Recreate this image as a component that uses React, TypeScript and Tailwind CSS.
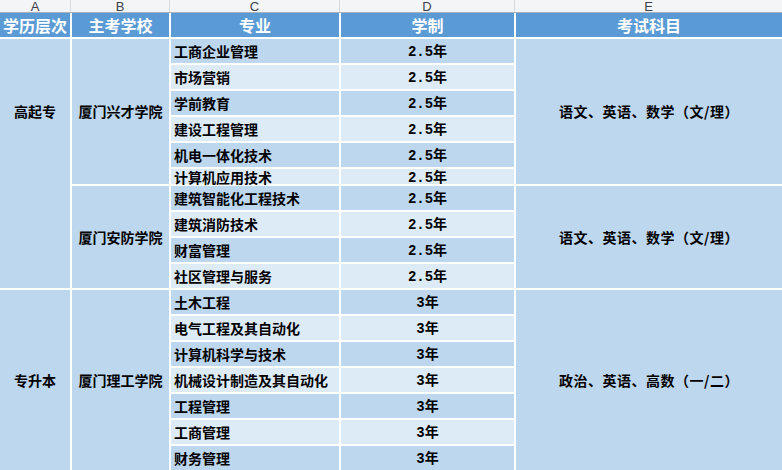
import React from 'react';

const majors = [
    { name: '工商企业管理', years: '2.5年' },
    { name: '市场营销', years: '2.5年' },
    { name: '学前教育', years: '2.5年' },
    { name: '建设工程管理', years: '2.5年' },
    { name: '机电一体化技术', years: '2.5年' },
    { name: '计算机应用技术', years: '2.5年' },
    { name: '建筑智能化工程技术', years: '2.5年' },
    { name: '建筑消防技术', years: '2.5年' },
    { name: '财富管理', years: '2.5年' },
    { name: '社区管理与服务', years: '2.5年' },
    { name: '土木工程', years: '3年' },
    { name: '电气工程及其自动化', years: '3年' },
    { name: '计算机科学与技术', years: '3年' },
    { name: '机械设计制造及其自动化', years: '3年' },
    { name: '工程管理', years: '3年' },
    { name: '工商管理', years: '3年' },
    { name: '财务管理', years: '3年' },
];

// row-start classes written out so tailwind picks them up
const rowStarts = [
    'row-start-2', 'row-start-3', 'row-start-4', 'row-start-5', 'row-start-6', 'row-start-7',
    'row-start-8', 'row-start-9', 'row-start-10', 'row-start-11', 'row-start-12', 'row-start-13',
    'row-start-14', 'row-start-15', 'row-start-16', 'row-start-17', 'row-start-18',
];

const cjk = "font-['Noto_Sans_CJK_SC',sans-serif]";

export default function App() {
    return (
        <div className={`w-[782px] h-[470px] overflow-hidden bg-white ${cjk}`}>
            {/* column letters */}
            <div className="grid grid-cols-[71px_99px_170px_175px_1fr] h-[13px] bg-[#f4f5f7] border-b border-[#a9b0bb] font-['Liberation_Sans',sans-serif] text-[13px] text-[#3a3f4a] leading-none overflow-hidden">
                {['A', 'B', 'C', 'D', 'E'].map((l, i) => (
                    <div
                        key={l}
                        className={`flex items-end justify-center pb-[4px] ${i < 4 ? 'border-r border-[#d6d9de]' : ''}`}
                    >
                        {l}
                    </div>
                ))}
            </div>

            <div className="grid grid-cols-[70px_97px_168px_173px_1fr] grid-rows-[24px_24px_24px_24px_24px_24px_15px_24px_24px_24px_24px_24px_24px_24px_24px_24px_24px_24px] gap-[2px] bg-white">
                {/* header */}
                {['学历层次', '主考学校', '专业', '学制', '考试科目'].map((h) => (
                    <div key={h} className="row-start-1 bg-[#5b9bd5] text-white text-[16px] font-bold flex items-center justify-center leading-none">
                        {h}
                    </div>
                ))}

                {/* level */}
                <div className="col-start-1 row-start-2 row-span-10 bg-[#bdd7ee] text-[14px] font-bold text-black">
                    <div className="h-[145px] flex items-center justify-center">高起专</div>
                </div>
                <div className="col-start-1 row-start-12 row-span-7 bg-[#bdd7ee] text-[14px] font-bold text-black flex items-center justify-center">
                    专升本
                </div>

                {/* school */}
                <div className="col-start-2 row-start-2 row-span-6 bg-[#bdd7ee] text-[14px] font-bold text-black flex items-center justify-center">
                    厦门兴才学院
                </div>
                <div className="col-start-2 row-start-8 row-span-4 bg-[#bdd7ee] text-[14px] font-bold text-black flex items-center justify-center">
                    厦门安防学院
                </div>
                <div className="col-start-2 row-start-12 row-span-7 bg-[#bdd7ee] text-[14px] font-bold text-black flex items-center justify-center">
                    厦门理工学院
                </div>

                {/* majors + years */}
                {majors.map((m, i) => {
                    const bg = i % 2 === 0 ? 'bg-[#bdd7ee]' : 'bg-[#ddebf7]';
                    return (
                        <React.Fragment key={m.name}>
                            <div className={`col-start-3 ${rowStarts[i]} ${bg} text-[14px] font-bold text-black flex items-center pl-[3px] leading-none`}>
                                {m.name}
                            </div>
                            <div className={`col-start-4 ${rowStarts[i]} ${bg} text-[14px] font-bold text-black flex items-center justify-center leading-none pt-[2px] font-['Liberation_Mono','Noto_Sans_CJK_SC',monospace]`}>
                                {m.years}
                            </div>
                        </React.Fragment>
                    );
                })}

                {/* subjects */}
                <div className="col-start-5 row-start-2 row-span-6 bg-[#bdd7ee] text-[14px] font-bold text-black tracking-[0.5px] flex items-center justify-center">
                    语文、英语、数学（文/理）
                </div>
                <div className="col-start-5 row-start-8 row-span-4 bg-[#bdd7ee] text-[14px] font-bold text-black tracking-[0.5px] flex items-center justify-center">
                    语文、英语、数学（文/理）
                </div>
                <div className="col-start-5 row-start-12 row-span-7 bg-[#bdd7ee] text-[14px] font-bold text-black tracking-[0.5px] flex items-center justify-center">
                    政治、英语、高数（一/二）
                </div>
            </div>
        </div>
    );
}
